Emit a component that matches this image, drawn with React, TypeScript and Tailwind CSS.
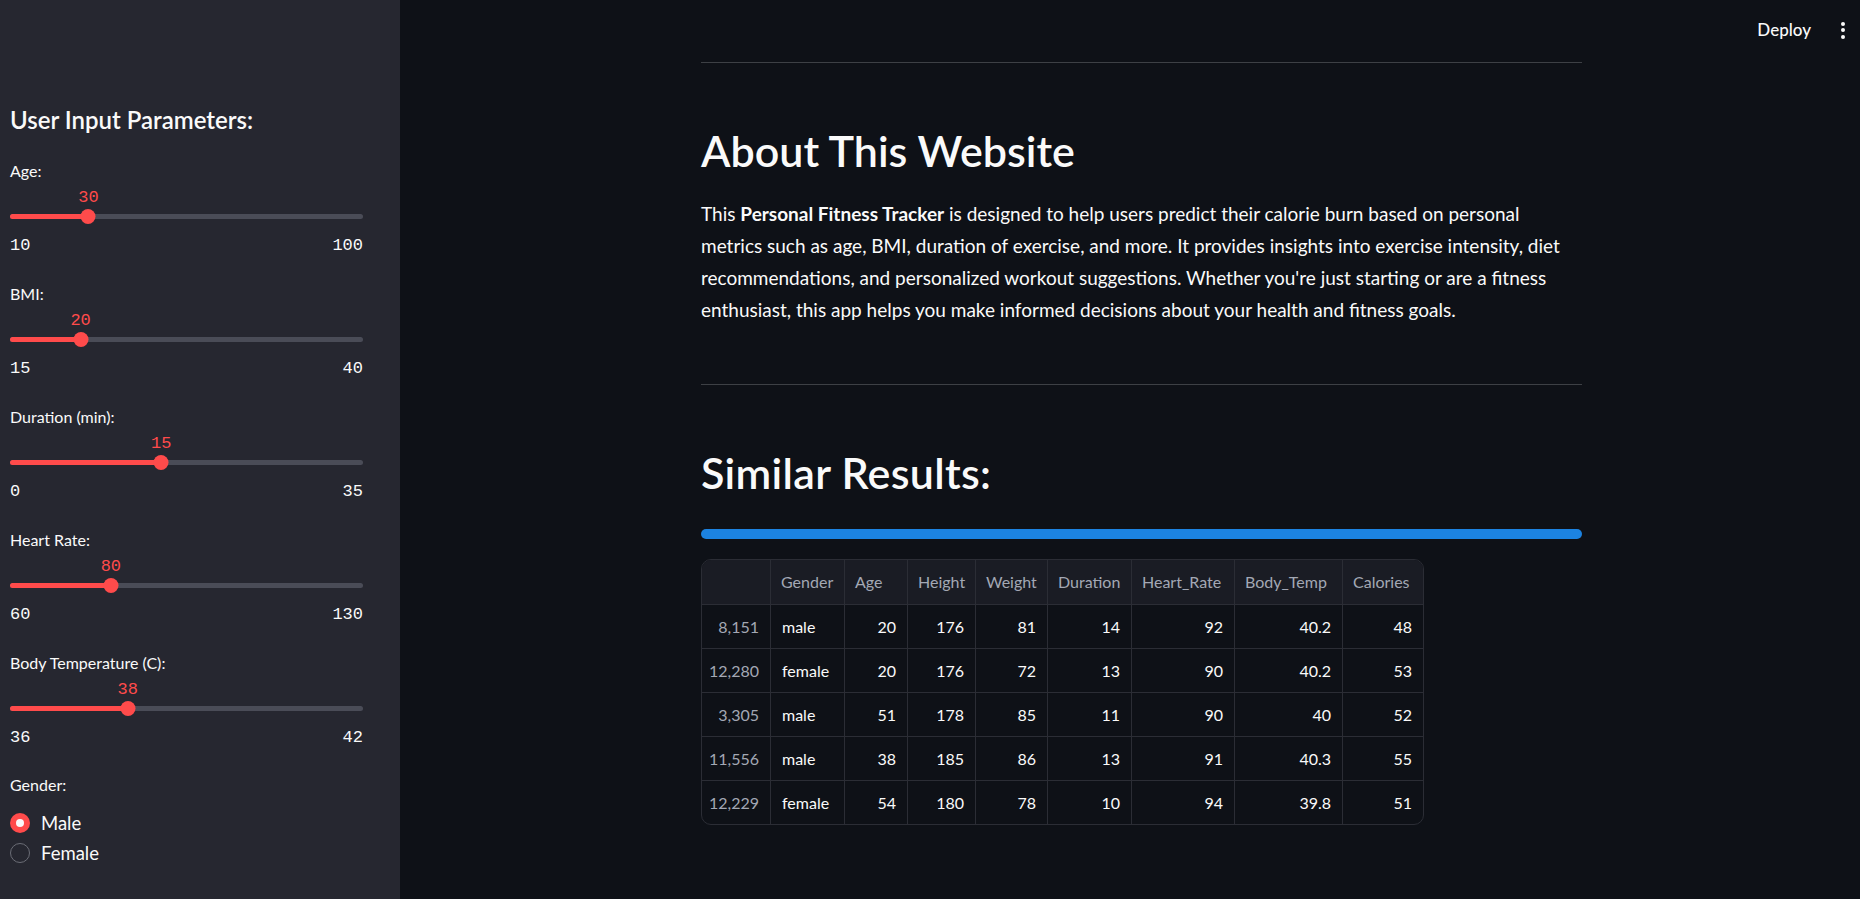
import React from "react";

type SliderProps = { label: string; value: number; min: number; max: number; last?: boolean };

function Slider({ label, value, min, max, last }: SliderProps) {
  const pct = ((value - min) / (max - min)) * 100;
  return (
    <div className={last ? "mb-[27px]" : "mb-[28px]"}>
      <div className="h-[20px] text-[16px] leading-[20px] text-[#fafafa]">{label}</div>
      <div className="relative mt-[7px] h-[20px]">
        <span
          className="absolute top-0 -translate-x-1/2 font-['Liberation_Mono',monospace] text-[17px] leading-[20px] text-[#ff4b4b]"
          style={{ left: `${pct}%` }}
        >
          {value}
        </span>
      </div>
      <div className="relative mt-[1.5px] flex h-[14px] items-center">
        <div className="h-[5px] w-full rounded-full bg-[#4a4c57]" />
        <div className="absolute left-0 h-[5px] rounded-full bg-[#ff4b4b]" style={{ width: `${pct}%` }} />
        <div
          className="absolute top-[-0.5px] h-[15px] w-[15px] -translate-x-1/2 rounded-full bg-[#ff4b4b]"
          style={{ left: `${pct}%` }}
        />
      </div>
      <div className="mt-[12.5px] flex h-[20px] justify-between font-['Liberation_Mono',monospace] text-[17px] leading-[20px] text-[#fafafa]">
        <span>{min}</span>
        <span>{max}</span>
      </div>
    </div>
  );
}

const cols = [
  { name: "", w: "w-[69px]" },
  { name: "Gender", w: "w-[74px]" },
  { name: "Age", w: "w-[63px]" },
  { name: "Height", w: "w-[68px]" },
  { name: "Weight", w: "w-[72px]" },
  { name: "Duration", w: "w-[84px]" },
  { name: "Heart_Rate", w: "w-[103px]" },
  { name: "Body_Temp", w: "w-[108px]" },
  { name: "Calories", w: "w-[80px]" },
];

const rows = [
  ["8,151", "male", "20", "176", "81", "14", "92", "40.2", "48"],
  ["12,280", "female", "20", "176", "72", "13", "90", "40.2", "53"],
  ["3,305", "male", "51", "178", "85", "11", "90", "40", "52"],
  ["11,556", "male", "38", "185", "86", "13", "91", "40.3", "55"],
  ["12,229", "female", "54", "180", "78", "10", "94", "39.8", "51"],
];

export default function App() {
  return (
    <div className="flex h-[899px] w-full overflow-hidden font-['Lato',sans-serif] text-[#fafafa]">
      {/* Sidebar */}
      <aside className="h-full w-[400px] shrink-0 bg-[#262730] pl-[10px] pr-[37px] pt-[105px]">
        <h2 className="h-[30px] text-[24px] font-semibold leading-[30px] text-[#fafafa]">User Input Parameters:</h2>
        <div className="mt-[25.5px]">
          <Slider label="Age:" value={30} min={10} max={100} />
          <Slider label="BMI:" value={20} min={15} max={40} />
          <Slider label="Duration (min):" value={15} min={0} max={35} />
          <Slider label="Heart Rate:" value={80} min={60} max={130} />
          <Slider label="Body Temperature (C):" value={38} min={36} max={42} last />
        </div>
        <div className="h-[20px] text-[16px] leading-[20px]">Gender:</div>
        <div className="mt-[13.5px] flex flex-col">
          <div className="flex h-[30px] items-center gap-[11px]">
            <span className="flex h-[20px] w-[20px] items-center justify-center rounded-full bg-[#ff4b4b]">
              <span className="h-[8px] w-[8px] rounded-full bg-[#fafafa]" />
            </span>
            <span className="text-[18.5px] leading-[24px]">Male</span>
          </div>
          <div className="flex h-[30px] items-center gap-[11px]">
            <span className="h-[20px] w-[20px] rounded-full border border-[#6b6d76]" />
            <span className="text-[18.5px] leading-[24px]">Female</span>
          </div>
        </div>
      </aside>

      {/* Main */}
      <main className="relative h-full flex-1 bg-[#0e1117]">
        <div className="absolute right-[15px] top-[18px] flex items-center gap-[30px]">
          <span className="text-[17px] font-medium leading-[24px]">Deploy</span>
          <span className="flex flex-col items-center gap-[2.5px]">
            <span className="h-[4px] w-[4px] rounded-full bg-[#fafafa]" />
            <span className="h-[4px] w-[4px] rounded-full bg-[#fafafa]" />
            <span className="h-[4px] w-[4px] rounded-full bg-[#fafafa]" />
          </span>
        </div>

        <div className="ml-[301px] w-[881px] pt-[62px]">
          <div className="h-px w-full bg-[#3d4045]" />
          <h1 className="mt-[61px] text-[43px] font-semibold leading-[53px]">About This Website</h1>
          <p className="mt-[21px] text-[19px] leading-[32px] text-[#fafafa]">
            This <b className="font-bold">Personal Fitness Tracker</b> is designed to help users predict their
            calorie burn based on personal metrics such as age, BMI, duration of exercise, and more. It provides
            insights into exercise intensity, diet recommendations, and personalized workout suggestions. Whether
            you're just starting or are a fitness enthusiast, this app helps you make informed decisions about your
            health and fitness goals.
          </p>
          <div className="mt-[58px] h-px w-full bg-[#3d4045]" />
          <h1 className="mt-[61px] text-[43px] font-semibold leading-[53px] tracking-[0.3px]">Similar Results:</h1>
          <div className="mt-[30px] h-[10px] w-full rounded-full bg-[#1c83e1]" />
          <div className="mt-[20px] w-[723px] overflow-hidden rounded-[10px] border border-[#2b2d35] text-[16px]">
            <div className="flex h-[44px] bg-[#1a1c24] text-[#a3a8b4]">
              {cols.map((c, i) => (
                <div
                  key={i}
                  className={`${c.w} flex items-center px-[10px] ${i < cols.length - 1 ? "border-r border-[#2b2d35]" : ""}`}
                >
                  {c.name}
                </div>
              ))}
            </div>
            {rows.map((r, ri) => (
              <div key={ri} className="flex h-[44px] border-t border-[#2b2d35]">
                {r.map((v, ci) => (
                  <div
                    key={ci}
                    className={`${cols[ci].w} flex items-center px-[11px] ${
                      ci === 1 ? "justify-start" : "justify-end"
                    } ${ci === 0 ? "text-[#a3a8b4]" : "text-[#fafafa]"} ${
                      ci < cols.length - 1 ? "border-r border-[#2b2d35]" : ""
                    }`}
                  >
                    {v}
                  </div>
                ))}
              </div>
            ))}
          </div>
        </div>
      </main>
    </div>
  );
}
